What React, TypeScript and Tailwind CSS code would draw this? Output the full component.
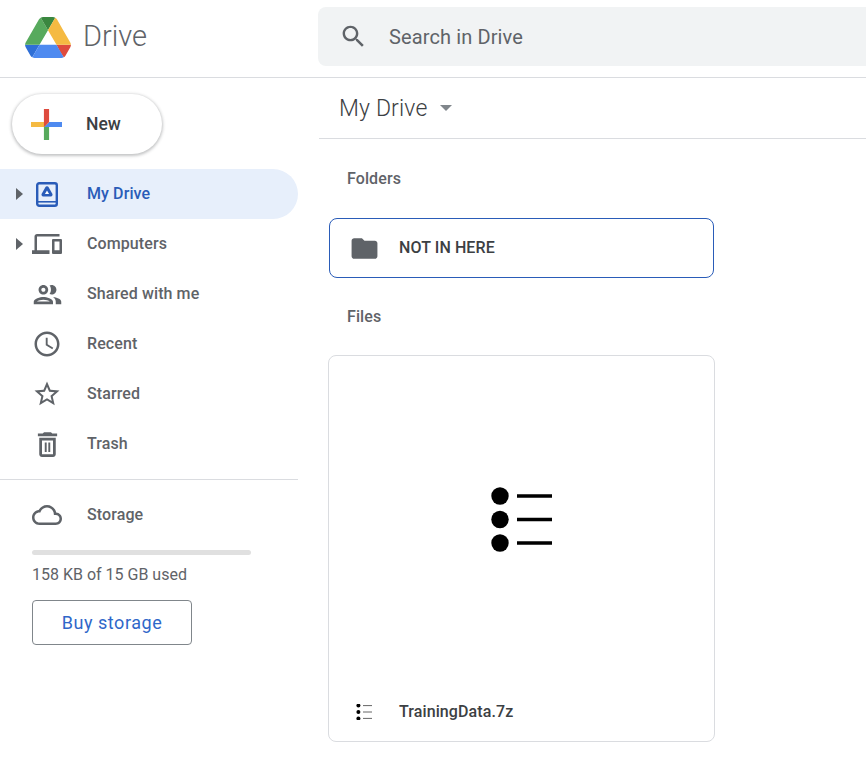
import React from 'react';

// Material icon paths
const ICONS = {
  search: 'M15.5 14h-.79l-.28-.27C15.41 12.59 16 11.11 16 9.5 16 5.91 13.09 3 9.5 3S3 5.91 3 9.5 5.91 16 9.5 16c1.61 0 3.09-.59 4.23-1.57l.27.28v.79l5 4.99L20.49 19l-4.99-5zm-6 0C7.01 14 5 11.99 5 9.5S7.01 5 9.5 5 14 7.01 14 9.5 11.99 14 9.5 14z',
  devices: 'M4 6h18V4H4c-1.1 0-2 .9-2 2v11H0v3h14v-3H4V6zm19 2h-6c-.55 0-1 .45-1 1v10c0 .55.45 1 1 1h6c.55 0 1-.45 1-1V9c0-.55-.45-1-1-1zm-1 9h-4v-7h4v7z',
  people: 'M9 13.75c-2.34 0-7 1.17-7 3.5V19h14v-1.75c0-2.33-4.66-3.5-7-3.5zM4.34 17c.84-.58 2.87-1.25 4.66-1.25s3.82.67 4.66 1.25H4.34zM9 12c1.93 0 3.5-1.57 3.5-3.5S10.93 5 9 5 5.5 6.57 5.5 8.5 7.07 12 9 12zm0-5c.83 0 1.5.67 1.5 1.5S9.83 10 9 10s-1.5-.67-1.5-1.5S8.17 7 9 7zm7.04 6.81c1.16.84 1.96 1.96 1.96 3.44V19h4v-1.75c0-2.02-3.5-3.17-5.96-3.44zM15 12c1.93 0 3.5-1.57 3.5-3.5S16.93 5 15 5c-.54 0-1.04.13-1.5.35.63.89 1 1.98 1 3.15s-.37 2.26-1 3.15c.46.22.96.35 1.5.35z',
  clock: 'M11.99 2C6.47 2 2 6.48 2 12s4.47 10 9.99 10C17.52 22 22 17.52 22 12S17.52 2 11.99 2zM12 20c-4.42 0-8-3.58-8-8s3.58-8 8-8 8 3.58 8 8-3.58 8-8 8zm.5-13H11v6l5.25 3.15.75-1.23-4.5-2.67z',
  star: 'M22 9.24l-7.19-.62L12 2 9.19 8.63 2 9.24l5.46 4.73L5.82 21 12 17.27 18.18 21l-1.63-7.03L22 9.24zM12 15.4l-3.76 2.27 1-4.28-3.32-2.88 4.38-.38L12 6.1l1.71 4.04 4.38.38-3.32 2.88 1 4.28L12 15.4z',
  trash: 'M6 19c0 1.1.9 2 2 2h8c1.1 0 2-.9 2-2V7H6v12zM8 9h8v10H8V9zm2 1.5h1.4v7H10zm2.6 0H14v7h-1.4zM15.5 4l-1-1h-5l-1 1H5v2h14V4z',
  cloud: 'M19.35 10.04C18.67 6.59 15.64 4 12 4 9.11 4 6.6 5.64 5.35 8.04 2.34 8.36 0 10.91 0 14c0 3.31 2.69 6 6 6h13c2.76 0 5-2.24 5-5 0-2.64-2.05-4.78-4.65-4.96zM19 18H6c-2.21 0-4-1.79-4-4s1.79-4 4-4h.71C7.37 7.69 9.48 6 12 6c3.04 0 5.5 2.46 5.5 5.5v.5H19c1.66 0 3 1.34 3 3s-1.34 3-3 3z',
  folder: 'M10 4H4c-1.1 0-1.99.9-1.99 2L2 18c0 1.1.9 2 2 2h16c1.1 0 2-.9 2-2V8c0-1.1-.9-2-2-2h-8l-2-2z',
};

function Icon({ d, className }: { d: string; className: string }) {
  return (
    <svg viewBox="0 0 24 24" className={className} fill="currentColor">
      <path d={d} />
    </svg>
  );
}

function DriveLogo() {
  return (
    <svg viewBox="0 0 87.3 78" className="w-[46px] h-[41px]">
      <path d="m6.6 66.85 3.85 6.65c.8 1.4 1.95 2.5 3.3 3.3l13.75-23.8h-27.5c0 1.55.4 3.1 1.2 4.5z" fill="#2f6fd6" />
      <path d="m43.65 25-13.75-23.8c-1.35.8-2.5 1.9-3.3 3.3l-25.4 44a9.06 9.06 0 0 0 -1.2 4.5h27.5z" fill="#57aa5d" />
      <path d="m73.55 76.8c1.35-.8 2.5-1.9 3.3-3.3l1.6-2.75 7.65-13.25c.8-1.4 1.2-2.95 1.2-4.5h-27.502l5.852 11.5z" fill="#de4b3e" />
      <path d="m43.65 25 13.75-23.8c-1.35-.8-2.9-1.2-4.5-1.2h-18.5c-1.6 0-3.15.45-4.5 1.2z" fill="#3a873f" />
      <path d="m59.8 53h-32.3l-13.75 23.8c1.35.8 2.9 1.2 4.5 1.2h50.8c1.6 0 3.15-.45 4.5-1.2z" fill="#4e8af0" />
      <path d="m73.4 26.5-12.7-22c-.8-1.4-1.95-2.5-3.3-3.3l-13.75 23.8 16.15 28h27.45c0-1.55-.4-3.1-1.2-4.5z" fill="#f5ba42" />
    </svg>
  );
}

function PlusLogo() {
  return (
    <svg viewBox="6 6 24 24" className="w-[31px] h-[31px]">
      <path d="M16 16v14h4V20z" fill="#57aa5d" />
      <path d="M30 16H20l-4 4h14z" fill="#4e8af0" />
      <path d="M6 16v4h10l4-4z" fill="#f5ba42" />
      <path d="M20 16V6h-4v14z" fill="#de4b3e" />
    </svg>
  );
}

function MyDriveIcon() {
  return (
    <svg viewBox="0 0 22 25" className="w-[22px] h-[25px]" fill="none">
      <rect x="1.2" y="1.2" width="19.6" height="22.6" rx="2" stroke="#2a5cb8" strokeWidth="2.4" />
      <path d="M1 19.8h20" stroke="#2a5cb8" strokeWidth="1.6" />
      <path d="M11 4.3c.8 0 1.4.4 1.8 1.1l3.5 6.4c.7 1.3-.1 2.7-1.5 2.7H7.2c-1.4 0-2.2-1.4-1.5-2.7l3.5-6.4c.4-.7 1-1.1 1.8-1.1z" fill="#2a5cb8" />
      <path d="M11 8.6l2.1 3.4H8.9z" fill="#fff" />
    </svg>
  );
}

function ListThumb({ small }: { small?: boolean }) {
  if (small) {
    return (
      <svg viewBox="0 0 16 16" className="w-[16px] h-[16px]">
        <circle cx="2.4" cy="1.6" r="2" fill="#000" />
        <circle cx="2.4" cy="8" r="2" fill="#000" />
        <circle cx="2.4" cy="14.4" r="2" fill="#000" />
        <path d="M7 1.6h9M7 8h9M7 14.4h9" stroke="#666" strokeWidth="1" />
      </svg>
    );
  }
  return (
    <svg viewBox="0 0 61 65" className="w-[61px] h-[65px]">
      <circle cx="9" cy="9" r="8.7" fill="#000" />
      <circle cx="9" cy="32.5" r="8.7" fill="#000" />
      <circle cx="9" cy="56" r="8.7" fill="#000" />
      <path d="M26 9h35M26 32.5h35M26 56h35" stroke="#000" strokeWidth="3.4" />
    </svg>
  );
}

function Caret() {
  return <div className="w-0 h-0 border-y-[6px] border-y-transparent border-l-[7px] border-l-[#5f6368]" />;
}

const NAV = [
  { label: 'Computers', icon: ICONS.devices, size: 'w-[30px] h-[30px]', caret: true },
  { label: 'Shared with me', icon: ICONS.people, size: 'w-[33px] h-[33px]' },
  { label: 'Recent', icon: ICONS.clock, size: 'w-[30px] h-[30px]' },
  { label: 'Starred', icon: ICONS.star, size: 'w-[30px] h-[30px]' },
  { label: 'Trash', icon: ICONS.trash, size: 'w-[33px] h-[33px]' },
];

export default function App() {
  return (
    <div className="w-[866px] h-[781px] overflow-hidden bg-white font-['Roboto',sans-serif] text-[#5f6368]">
      {/* Header */}
      <header className="flex h-[78px] border-b border-[#dadce0]">
        <div className="flex w-[318px] shrink-0 items-center pl-[25px] pb-[3px]">
          <DriveLogo />
          <span className="ml-[12px] text-[29px] font-[350] text-[#5f6368]">Drive</span>
        </div>
        <div className="mt-[7px] flex h-[59px] w-[720px] shrink-0 items-center rounded-lg bg-[#f1f3f4] pl-[21px]">
          <Icon d={ICONS.search} className="w-[29px] h-[29px] text-[#5f6368]" />
          <span className="ml-[21px] text-[20px] tracking-[0.12px] text-[#5f6368]">Search in Drive</span>
        </div>
      </header>

      <div className="flex">
        {/* Sidebar */}
        <aside className="w-[298px] shrink-0 pt-4">
          <button className="ml-3 flex h-[60px] w-[150px] items-center rounded-full bg-white pl-[19px] shadow-[0_1px_3px_1px_rgba(60,64,67,0.3)]">
            <PlusLogo />
            <span className="ml-6 pt-px text-[17.5px] font-[460] text-[#3c4043]">New</span>
          </button>

          <nav className="mt-[15px]">
            <div className="flex h-[50px] items-center rounded-r-full bg-[#e7effb] pl-4">
              <Caret />
              <div className="ml-[13px] mr-[29px]"><MyDriveIcon /></div>
              <span className="text-[16px] font-medium tracking-[0.1px] text-[#2a5cb8]">My Drive</span>
            </div>
            {NAV.map((item) => (
              <div key={item.label} className="relative flex h-[50px] items-center pl-8">
                {item.caret && (
                  <div className="absolute left-4 top-[19px]"><Caret /></div>
                )}
                <div className="flex w-[30px] justify-center">
                  <Icon d={item.icon} className={`${item.size} shrink-0 text-[#5f6368]`} />
                </div>
                <span className="ml-[25px] text-[16px] font-[460] tracking-[0.1px] text-[#5f6368]">{item.label}</span>
              </div>
            ))}
          </nav>

          <div className="mt-[10px] border-t border-[#dadce0]" />

          <div className="flex h-[70px] items-center pl-8 pb-[1px]">
            <Icon d={ICONS.cloud} className="w-[30px] h-[30px] text-[#5f6368]" />
            <span className="ml-[25px] text-[16px] font-[460] tracking-[0.1px] text-[#5f6368]">Storage</span>
          </div>
          <div className="ml-8 h-[5px] w-[219px] rounded-full bg-[#e0e0e0]" />
          <div className="ml-8 mt-[10px] text-[16px] leading-5 text-[#5f6368]">158 KB of 15 GB used</div>
          <button className="ml-8 mt-[15px] h-[45px] w-[160px] rounded border border-[#80868b] text-[18px] font-[440] tracking-[0.55px] text-[#2f67c9]">
            Buy storage
          </button>
        </aside>

        {/* Main */}
        <main className="ml-[21px] flex-1">
          <div className="flex h-[61px] items-center border-b border-[#dadce0] pl-[20px]">
            <span className="pt-[2px] text-[23px] font-[350] tracking-[0.15px] text-[#3c4043]">My Drive</span>
            <div className="ml-[13px] h-0 w-0 border-x-[6px] border-t-[6px] border-x-transparent border-t-[#80868b]" />
          </div>

          <div className="ml-[9px]">
            <div className="ml-[19px] mt-[28px] text-[16px] font-[460] leading-6 tracking-[0.1px] text-[#5f6368]">Folders</div>
            <div className="ml-px mt-[27px] flex h-[60px] w-[385px] items-center rounded-lg border border-[#2a5cb8] pl-[20px]">
              <Icon d={ICONS.folder} className="w-[31px] h-[31px] -ml-[1px] text-[#5f6368]" />
              <span className="ml-[19px] text-[16px] font-[460] tracking-[0.1px] text-[#3c4043]">NOT IN HERE</span>
            </div>
            <div className="ml-[19px] mt-[27px] text-[16px] font-[460] leading-6 tracking-[0.1px] text-[#5f6368]">Files</div>
            <div className="mt-[26px] flex h-[387px] w-[387px] flex-col rounded-lg border border-[#dadce0]">
              <div className="flex h-[324px] items-center justify-center pt-[2px]">
                <ListThumb />
              </div>
              <div className="flex items-center pl-[27px] pt-[20px]">
                <ListThumb small />
                <span className="ml-[27px] text-[16px] font-[460] tracking-[0.1px] text-[#3c4043]">TrainingData.7z</span>
              </div>
            </div>
          </div>
        </main>
      </div>
    </div>
  );
}
